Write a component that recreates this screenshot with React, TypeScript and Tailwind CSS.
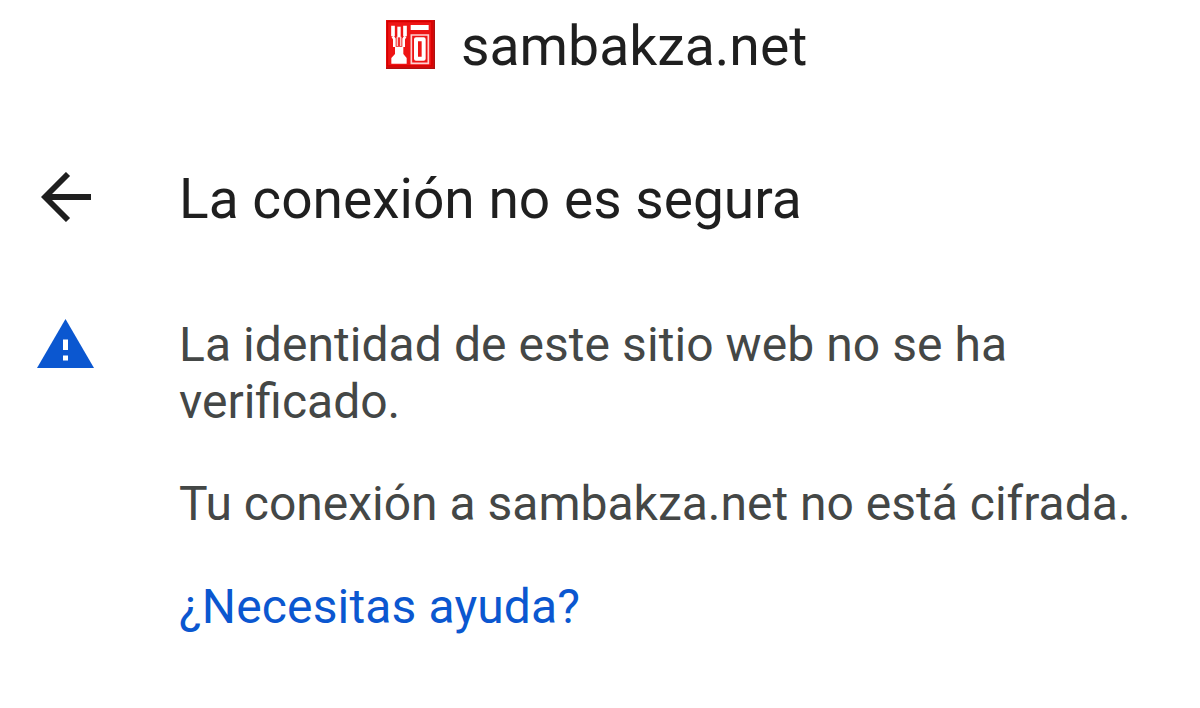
import React from 'react';

interface IconProps {
  className?: string;
}

const SiteFavicon = ({ className }: IconProps) => (
  <svg className={className} viewBox="0 0 147 147">
    <defs>
      <filter id="favicon-soften">
        <feGaussianBlur stdDeviation="1.8" />
      </filter>
    </defs>
    <rect width="147" height="147" fill="#b30f0f" />
    <rect width="142" height="142" fill="#ee1414" />
    <path d="M4 4h134v134H4z" fill="none" stroke="#d60000" strokeWidth="5" />
    <g fill="none" stroke="#fff" filter="url(#favicon-soften)">
      <path d="M21 17v32M57 17v32" strokeWidth="11" />
      <path d="M20 49l5 8v24M58 49l-5 8v24" strokeWidth="8" />
      <path d="M34 50v28M44 50v28" stroke="#ffc4c4" strokeWidth="5" />
      <path d="M39 20v32" strokeWidth="10" />
    </g>
    <g fill="#fff" filter="url(#favicon-soften)">
      <path d="M27 80h25v22l10 12v17H16v-17l11-12z" />
      <path d="M74 15h54v15H74z" />
    </g>
    <g fill="none" filter="url(#favicon-soften)">
      <path d="M76 45h51v85H76z" stroke="#ffd0d0" strokeWidth="5" />
      <path d="M90 58h23v58H90z" stroke="#fff" strokeWidth="12" strokeLinejoin="round" />
    </g>
  </svg>
);

const BackArrow = ({ className }: IconProps) => (
  <svg className={className} viewBox="0 0 50 50" fill="none" stroke="#1f1f1f" strokeWidth="5.800">
    <path d="M50 25H5M27 2 4 25l23 23" />
  </svg>
);

const WarningTriangle = ({ className }: IconProps) => (
  <svg className={className} viewBox="0 0 57 49">
    <path d="M28.500 0 57 49H0z" fill="#0b57d0" />
    <path d="M26 20.500h5v10.500h-5zM26 36.500h5v5h-5z" fill="#fff" />
  </svg>
);

const App = () => {
  return (
    <main className="h-[708px] w-[1200px] overflow-hidden bg-white font-[Roboto,sans-serif] text-[#1f1f1f]">
      <header className="flex items-start pt-[14px] pl-[386px]">
        <SiteFavicon className="mt-[6px] size-[49px]" />
        <h1 className="mt-px ml-[26px] text-[55.3px] leading-[64px] whitespace-nowrap">
          sambakza.net
        </h1>
      </header>
      <section className="mt-[88px] flex items-start pl-[41px]">
        <button type="button" aria-label="Atrás" className="mt-[5px]">
          <BackArrow className="size-[50px]" />
        </button>
        <h2 className="ml-[88px] text-[55.1px] leading-[64px] whitespace-nowrap">
          La conexión no es segura
        </h2>
      </section>
      <section className="mt-[85px] flex items-start pl-[37px]">
        <WarningTriangle className="mt-[3px] h-[49px] w-[57px] shrink-0" />
        <div className="ml-[85px] text-[48px] leading-[57px] whitespace-nowrap text-[#444746]">
          <p>
            <span className="tracking-[0.06px]">La identidad de este sitio web no se ha</span>
            <br />
            verificado.
          </p>
          <p className="mt-[45px]">Tu conexión a sambakza.net no está cifrada.</p>
          <a href="#ayuda" className="mt-[46px] block tracking-[0.14px] text-[#0b57d0]">
            ¿Necesitas ayuda?
          </a>
        </div>
      </section>
    </main>
  );
};

export default App;
